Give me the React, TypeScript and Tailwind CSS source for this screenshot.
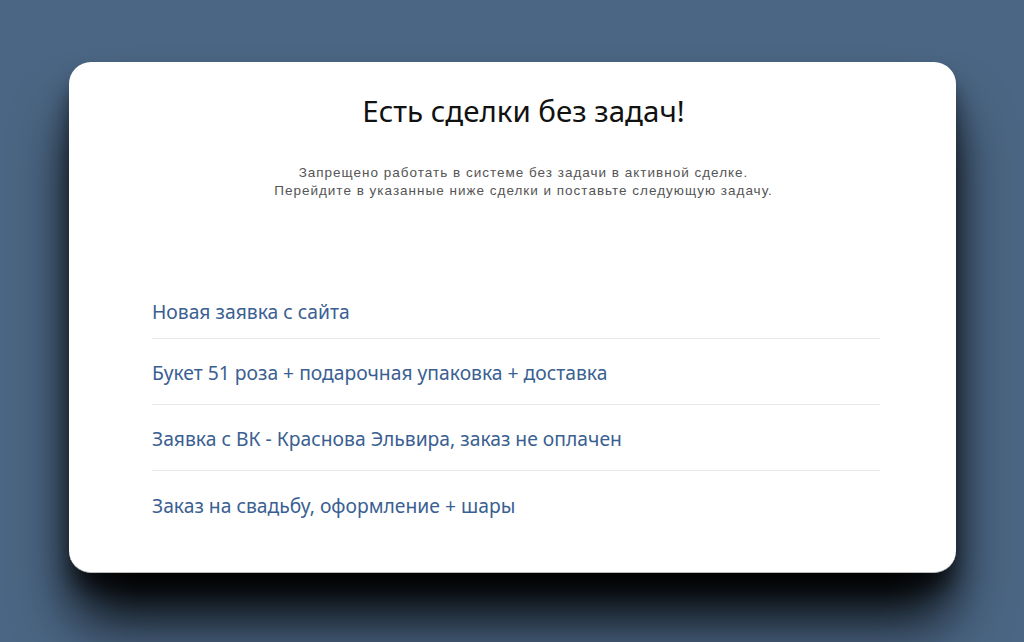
const deals = [
  'Новая заявка с сайта',
  'Букет 51 роза + подарочная упаковка + доставка',
  'Заявка с ВК - Краснова Эльвира, заказ не оплачен',
  'Заказ на свадьбу, оформление + шары',
];

export default function App() {
  return (
    <div className="w-[1024px] h-[642px] overflow-hidden bg-[#4b6684] pt-[62px] px-[69px]">
      <div className="w-[887px] h-[511px] bg-white rounded-[22px] border-b border-[#bbb] shadow-[0_50px_60px_-6px_rgba(0,0,0,1),0_18px_24px_-4px_rgba(0,0,0,0.7)] flex flex-col items-center pt-[94px]">
        <div className="pl-[22px] flex flex-col items-center">
          <h1
            className="text-[29.5px] leading-[36px] text-[#111] mt-[-63px]"
            style={{ fontFamily: '"Noto Sans", sans-serif' }}
          >
            Есть сделки без задач!
          </h1>
          <p
            className="mt-[35px] text-center text-[13.5px] leading-[18px] tracking-[1px] text-[#555]"
            style={{ fontFamily: '"Liberation Sans", Arial, sans-serif' }}
          >
            Запрещено работать в системе без задачи в активной сделке.
            <br />
            Перейдите в указанные ниже сделки и поставьте следующую задачу.
          </p>
        </div>
        <ul className="mt-[73px] w-[728px] self-start ml-[83px]" style={{ fontFamily: '"Noto Sans", sans-serif' }}>
          {deals.map((d, i) => (
            <li
              key={d}
              className={
                i < deals.length - 1
                  ? 'border-b border-[#e8e8e8] h-[66px] pb-[6px] flex items-end text-[19.3px] leading-[26px] text-[#3a6091]'
                  : 'h-[66px] pb-[6px] flex items-end text-[19.3px] leading-[26px] text-[#3a6091]'
              }
            >
              <span className={i === 0 ? 'pb-[7px]' : 'pb-[12px]'}>{d}</span>
            </li>
          ))}
        </ul>
      </div>
    </div>
  );
}
